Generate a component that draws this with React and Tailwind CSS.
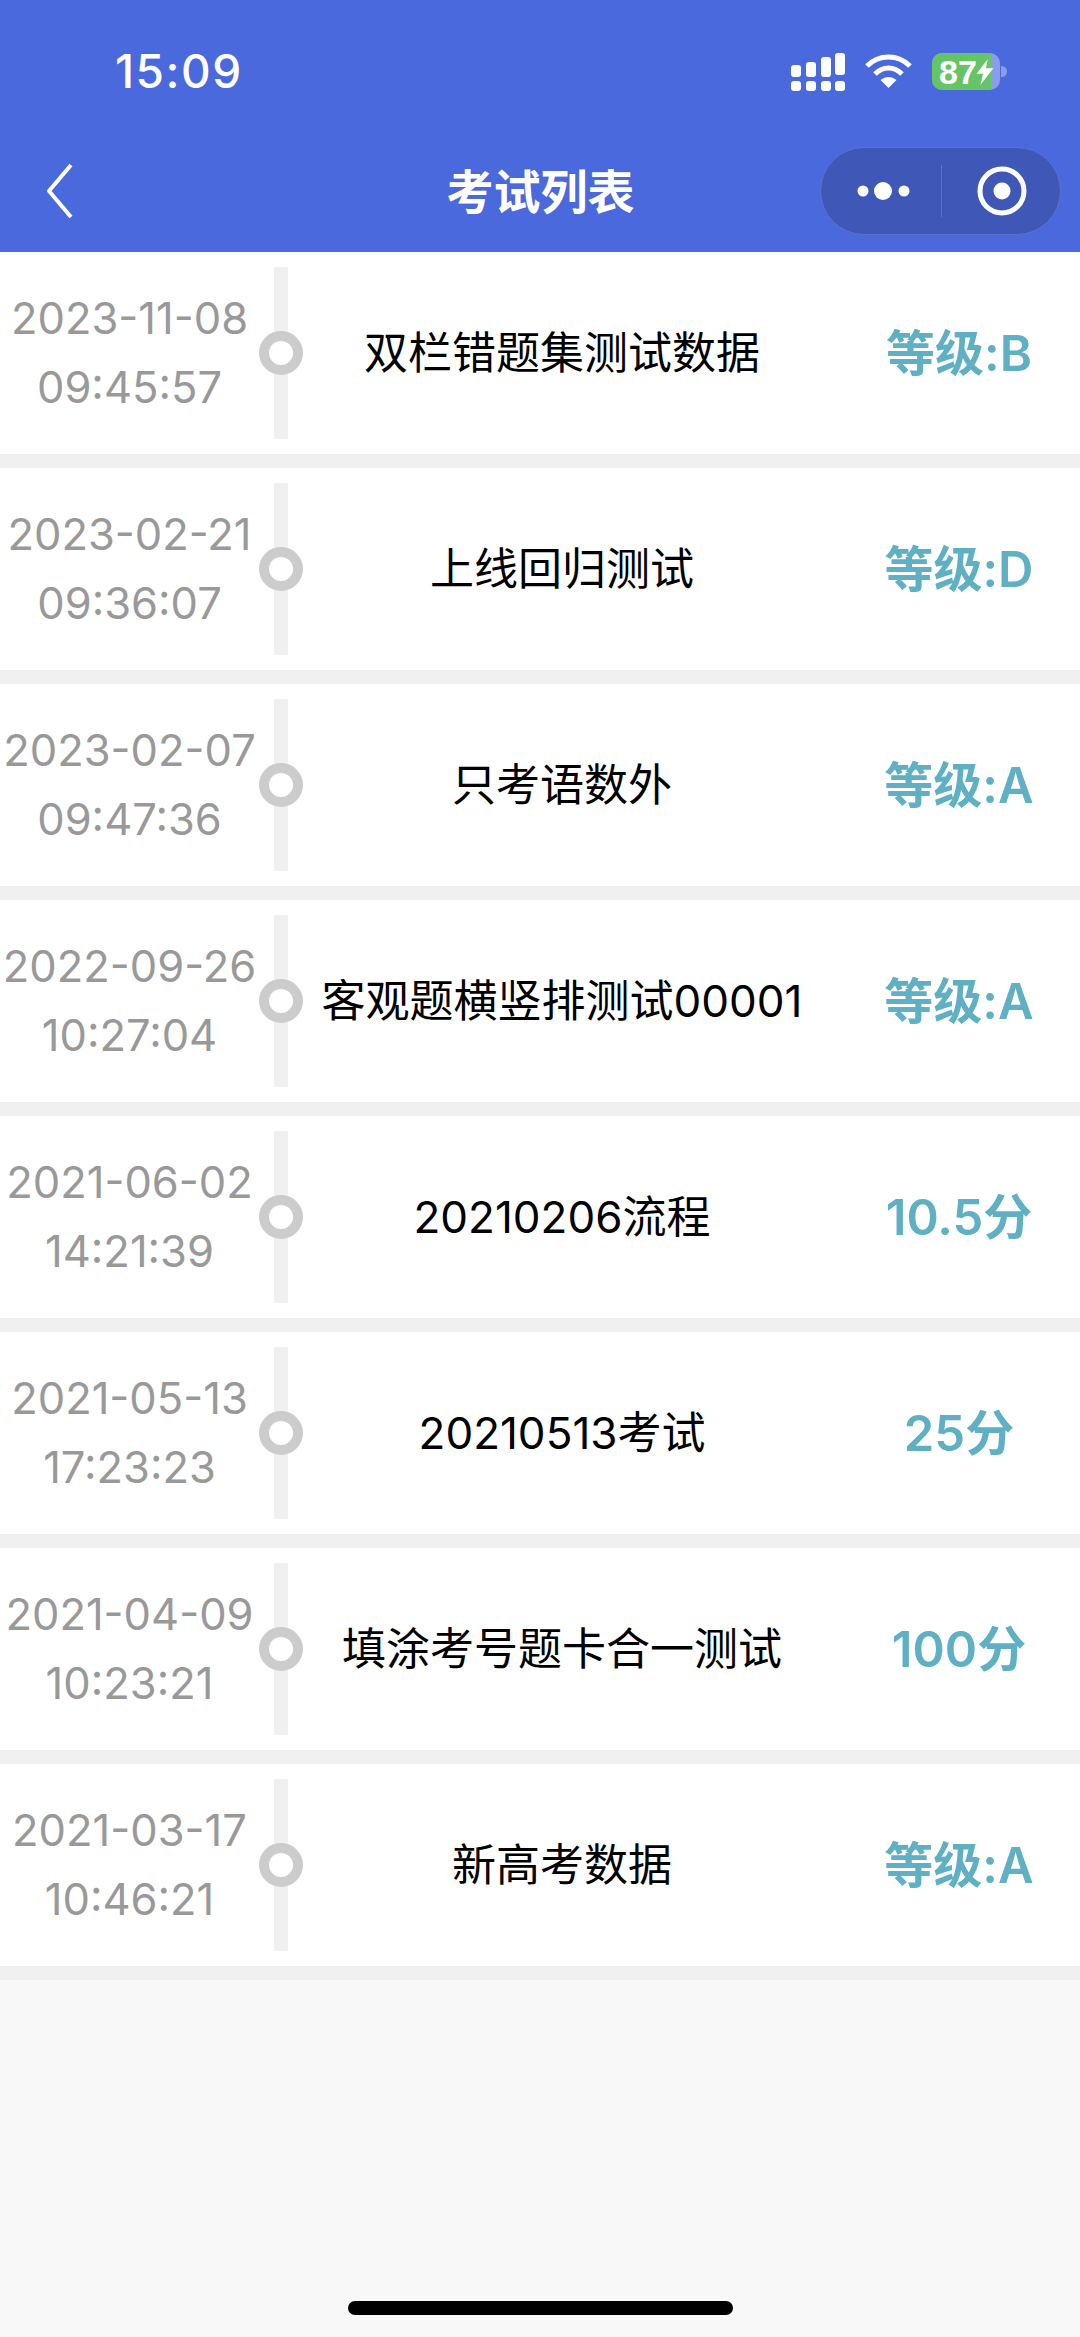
const exams = [
  { date: "2023-11-08", time: "09:45:57", name: "双栏错题集测试数据", score: "等级:B" },
  { date: "2023-02-21", time: "09:36:07", name: "上线回归测试", score: "等级:D" },
  { date: "2023-02-07", time: "09:47:36", name: "只考语数外", score: "等级:A" },
  { date: "2022-09-26", time: "10:27:04", name: "客观题横竖排测试00001", score: "等级:A" },
  { date: "2021-06-02", time: "14:21:39", name: "20210206流程", score: "10.5分" },
  { date: "2021-05-13", time: "17:23:23", name: "20210513考试", score: "25分" },
  { date: "2021-04-09", time: "10:23:21", name: "填涂考号题卡合一测试", score: "100分" },
  { date: "2021-03-17", time: "10:46:21", name: "新高考数据", score: "等级:A" },
]

const fontStack = "font-['Inter','Noto_Sans_CJK_SC',sans-serif]"

function SignalIcon() {
  return (
    <svg width="54" height="38" viewBox="0 0 54 38" fill="#fff">
      <rect x="0" y="12" width="10" height="12" rx="3" />
      <rect x="15" y="9" width="10" height="15" rx="3" />
      <rect x="30" y="4" width="10" height="20" rx="3" />
      <rect x="44" y="0" width="10" height="22" rx="3" />
      <rect x="0" y="28" width="10" height="10" rx="3" />
      <rect x="15" y="28" width="10" height="10" rx="3" />
      <rect x="30" y="28" width="10" height="10" rx="3" />
      <rect x="44" y="28" width="10" height="10" rx="3" />
    </svg>
  )
}

function WifiIcon() {
  return (
    <svg width="47" height="35" viewBox="0 0 47 35" fill="none" stroke="#fff" strokeWidth="5">
      <path d="M2 13 C14 1 33 1 45 13" />
      <path d="M10 21 C18 13 29 13 37 21" />
      <path d="M15.5 27 L23.5 35 L31.5 27 C26 23 21 23 15.5 27 Z" fill="#fff" stroke="none" />
    </svg>
  )
}

function Battery() {
  return (
    <div className="flex items-center">
      <div className="relative h-[37px] w-[68px] overflow-hidden rounded-[10px] bg-[#8a9de8]">
        <div className="h-full w-[59px] bg-[#65c466]" />
        <div className="absolute inset-0 flex items-center pl-[7px]">
          <span className="text-[34px] leading-none font-bold text-white font-['Liberation_Sans',sans-serif]">87</span>
          <svg width="18" height="26" viewBox="0 0 18 28" fill="#fff" className="-ml-px">
            <path d="M12 0 L0 16 H7 L4 28 L18 10 H10 Z" />
          </svg>
        </div>
      </div>
      <div className="ml-px h-[11px] w-[6px] rounded-r-full bg-[#8a9de8]" />
    </div>
  )
}

function Capsule() {
  return (
    <div className="flex h-[88px] w-[241px] items-center rounded-full border border-[#5b72cb] bg-[#3f58b8]">
      <div className="flex w-[120px] items-center justify-center pl-[8px]">
        <svg width="56" height="20" viewBox="0 0 56 20" fill="#fff">
          <circle cx="6" cy="10" r="5.5" />
          <circle cx="26" cy="10" r="9" />
          <circle cx="47" cy="10" r="5.5" />
        </svg>
      </div>
      <div className="h-[52px] w-px bg-[#5b72cb]" />
      <div className="flex flex-1 items-center justify-center pl-[2px]">
        <svg width="50" height="50" viewBox="0 0 50 50" fill="none">
          <circle cx="25" cy="25" r="22" stroke="#fff" strokeWidth="5" />
          <circle cx="25" cy="25" r="8.5" fill="#fff" />
        </svg>
      </div>
    </div>
  )
}

function ExamRow({ exam }) {
  return (
    <div className="flex h-[202px] items-center bg-white">
      <div className="w-[259px] text-center text-[43.5px] leading-[69px] text-[#999999]">
        <div className="whitespace-nowrap">{exam.date}</div>
        <div>{exam.time}</div>
      </div>
      <div className="relative flex w-[44px] justify-center self-stretch py-[15px]">
        <div className="w-[14px] bg-[#f0f0f0]" />
        <div className="absolute top-[79px] left-0 h-[44px] w-[44px] rounded-full border-[10px] border-[#cccccc] bg-white" />
      </div>
      <div className="flex-1 pr-[17px] text-center text-[44px] leading-none whitespace-nowrap text-black">
        {exam.name}
      </div>
      <div className="w-[242px] text-center text-[49px] leading-none font-semibold whitespace-nowrap text-[#5fb0c4]">
        {exam.score}
      </div>
    </div>
  )
}

export default function App() {
  return (
    <div className={`flex min-h-[2337px] flex-col bg-[#f8f8f8] ${fontStack}`}>
      <header className="h-[252px] bg-[#4a69dc] text-white">
        <div className="flex h-[147px] items-start pt-[53px] pr-[73px] pl-[115px]">
          <span className="text-[46px] leading-[37px] font-medium tracking-[1.5px]">15:09</span>
          <div className="ml-auto flex items-start gap-[20px]">
            <SignalIcon />
            <WifiIcon />
            <Battery />
          </div>
        </div>
        <div className="grid grid-cols-[1fr_auto_1fr] items-center pr-[19px] pl-[44px]">
          <svg width="32" height="58" viewBox="0 0 32 58" fill="none" stroke="#fff" strokeWidth="4">
            <path d="M27 3 L5 29 L27 55" strokeLinejoin="round" />
          </svg>
          <h1 className="-translate-x-[12px] text-[47px] leading-none font-semibold">考试列表</h1>
          <div className="flex justify-end">
            <Capsule />
          </div>
        </div>
      </header>

      <main className="flex-1">
        <div className="flex flex-col gap-[14px] bg-[#f0f0f0] pb-[14px]">
          {exams.map((exam) => (
            <ExamRow key={exam.date} exam={exam} />
          ))}
        </div>
      </main>

      <div className="flex justify-center pb-[22px]">
        <div className="h-[14px] w-[385px] rounded-full bg-black" />
      </div>
    </div>
  )
}
